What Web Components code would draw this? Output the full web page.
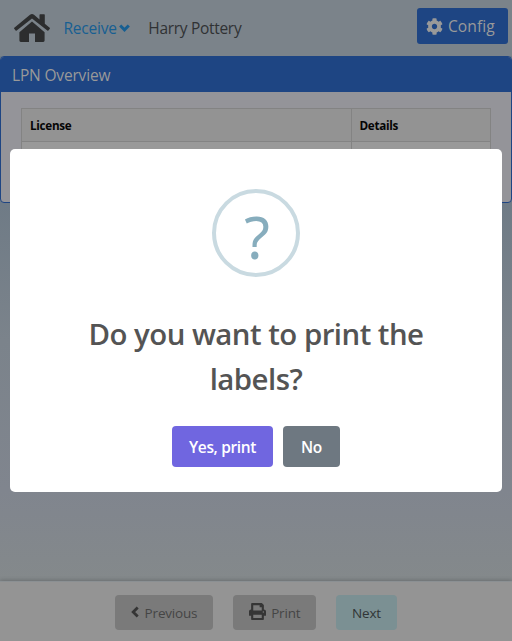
<!DOCTYPE html>
<html lang="en"><head><meta charset="utf-8"><title>LPN Overview</title>
<style>
html,body{margin:0;height:100%;overflow:hidden}
body{font:15.5px/24px "Open Sans","Noto Sans",sans-serif;color:#303234}
</style></head><body>
<lpn-app></lpn-app>
<script>
const define=(name,html)=>customElements.define(name,class extends HTMLElement{
  constructor(){super();this.attachShadow({mode:'open'}).innerHTML=html}
});

define('top-bar',`<style>
:host{display:flex;height:56px;box-sizing:border-box;padding:8px 4px 12px 14px;background:#7b838a;align-items:flex-start}
.home{width:36px;height:28px;margin-top:6px;fill:#2c2d2e}
.link{display:flex;align-items:center;height:24px;margin:8px 0 0 13.500px;color:#175f92;letter-spacing:-.2px}
.link svg{width:11px;height:8px;margin:0 0 1px 2.500px;fill:none;stroke:#175f92;stroke-width:3}
.user{margin:8px 0 0 18px;letter-spacing:-.31px}
.cfg{margin-left:auto;width:91px;height:36px;box-sizing:border-box;padding-left:9px;display:flex;align-items:center;background:#1e4583;color:#999;border-radius:3px;letter-spacing:.04px;font-size:15.600px}
.cfg svg{width:17px;height:17px;margin-right:5px;fill:#999}
</style>
<svg class="home" viewBox="0 0 36 28"><path d="M18 7.6 5.4 18.2V26.6Q5.4 28 6.8 28H15V19.5H21V28H29.200Q30.600 28 30.600 26.600V18.200Z"/><path d="M18 0Q19 0 20 .8L25.500 5.400V.9Q25.500.2 26.200.2H30.200Q30.800.2 30.800.9V9.700L35.700 13.800Q36.200 14.300 35.800 14.800L34.400 16.500Q33.900 17 33.300 16.600L18 4.400 2.700 16.600Q2.100 17 1.600 16.500L.2 14.800Q-.2 14.300.3 13.800L16 .8Q17 0 18 0Z"/></svg>
<div class="link">Receive<svg viewBox="0 0 11 8"><path d="M1.200 1.500 5.500 5.800 9.800 1.500"/></svg></div>
<div class="user">Harry Pottery</div>
<div class="cfg"><svg viewBox="0 0 512 512"><path d="M487.400 315.700l-42.600-24.600c4.300-23.200 4.300-47 0-70.200l42.600-24.600c4.900-2.800 7.100-8.600 5.500-14-11.100-35.600-30-67.800-54.700-94.600-3.800-4.100-10-5.100-14.800-2.300L380.800 110c-17.900-15.400-38.500-27.300-60.800-35.100V25.800c0-5.600-3.900-10.500-9.400-11.700-36.700-8.200-74.300-7.800-109.200 0-5.500 1.200-9.400 6.100-9.400 11.700V75c-22.200 7.900-42.800 19.800-60.800 35.100L88.700 85.500c-4.900-2.800-11-1.900-14.800 2.300-24.700 26.700-43.600 58.900-54.700 94.600-1.700 5.400.6 11.200 5.500 14L67.300 221c-4.300 23.200-4.300 47 0 70.200l-42.600 24.600c-4.900 2.800-7.100 8.600-5.500 14 11.100 35.600 30 67.800 54.700 94.600 3.800 4.100 10 5.100 14.800 2.300l42.600-24.600c17.900 15.400 38.500 27.300 60.800 35.100v49.200c0 5.600 3.900 10.500 9.400 11.700 36.700 8.200 74.300 7.800 109.200 0 5.500-1.200 9.400-6.100 9.400-11.700v-49.200c22.200-7.900 42.800-19.800 60.800-35.100l42.600 24.600c4.900 2.800 11 1.900 14.800-2.300 24.700-26.700 43.600-58.900 54.700-94.600 1.500-5.500-.7-11.300-5.600-14.100zM256 336c-44.100 0-80-35.900-80-80s35.900-80 80-80 80 35.900 80 80-35.900 80-80 80z"/></svg>Config</div>`);

define('overview-panel',`<style>
:host{display:block;height:147px;box-sizing:border-box;border:1px solid #1e4583;border-radius:4px;background:#949499;overflow:hidden}
.head{height:35px;line-height:36px;padding-left:11px;background:#1e4583;color:#999;letter-spacing:-.17px}
.grid{display:grid;grid-template-columns:329px 138px;grid-template-rows:32px 32px;gap:1px;width:468px;margin:16px 0 0 20px;border:1px solid #838383;background:#838383}
.grid>div{background:#999}
.grid>.th{background:#939393;color:#050505;font-weight:700;font-size:11.700px;line-height:33px;padding-left:8px;letter-spacing:-.3px}
.grid>.th+.th{padding-left:7.500px}
</style><div class="head"><slot></slot></div>
<div class="grid"><div class="th">License</div><div class="th">Details</div><div></div><div></div></div>`);

define('bottom-bar',`<style>
:host{display:flex;justify-content:center;gap:20px;height:60px;box-sizing:border-box;padding-top:13px;border-top:1px solid #8b9093;background:#949494;box-shadow:0 -1px 4px #0003}
</style><slot></slot>`);

define('foot-button',`<style>
:host{display:flex;align-items:center;justify-content:center;box-sizing:border-box;width:var(--w);height:35px;border-radius:4px;background:#7a7a7a;color:#454545;font-size:13.500px;letter-spacing:-.18px}
:host([primary]){background:#7b9093;color:#303536}
::slotted(svg){flex:none}
</style><slot></slot>`);

define('confirm-dialog',`<style>
:host{position:absolute;left:10px;top:149px;width:492px;height:343px;display:flex;flex-direction:column;align-items:center;box-sizing:border-box;padding-top:40px;background:#fff;border-radius:5px;color:#545454}
.icon{box-sizing:border-box;width:88px;height:88px;border:4px solid #c9dae1;border-radius:50%;color:#87adbd;font-family:"Noto Sans",sans-serif;font-size:59px;line-height:80px;text-align:center}
.icon span{display:inline-block;transform:translate(1px,3px)}
h2{margin:35px 0 0;width:350px;text-align:center;font-size:29.400px;line-height:45px;font-weight:600;letter-spacing:-.52px}
.row{display:flex;gap:10px;margin-top:24px}
.b{height:41px;line-height:42px;width:101px;text-align:center;border-radius:4px;background:#7066e0;color:#fff;font-weight:600;font-size:15.500px;letter-spacing:-.35px}
.b+.b{width:57px;background:#6e7881}
</style><div class="icon"><span>?</span></div><h2>Do you want to print the labels?</h2>
<div class="row"><div class="b">Yes, print</div><div class="b">No</div></div>`);

define('lpn-app',`<style>
:host{display:flex;flex-direction:column;height:641px;width:512px;background:linear-gradient(#6f7b86 203px,#7b838b 340px,#80858e 490px,#84898b 581px)}
.space{flex:1}
</style>
<top-bar></top-bar><overview-panel>LPN Overview</overview-panel><div class="space"></div>
<bottom-bar>
<foot-button style="--w:98px"><svg width="8" height="12" viewBox="0 0 8 12" style="margin:0 6px 2px 0" fill="none" stroke="#353535" stroke-width="2.800"><path d="M6.700 1.500 2.200 6 6.700 10.500"/></svg>Previous</foot-button>
<foot-button style="--w:83px"><svg width="17" height="17" viewBox="0 0 512 512" style="margin:0 5.5px 2px 0" fill="#353535"><path d="M448 192V77.250c0-8.490-3.370-16.620-9.370-22.630L393.370 9.370c-6-6-14.140-9.370-22.630-9.370H96C78.330 0 64 14.330 64 32v160c-35.350 0-64 28.650-64 64v112c0 8.840 7.160 16 16 16h48v96c0 17.670 14.330 32 32 32h320c17.670 0 32-14.330 32-32v-96h48c8.840 0 16-7.160 16-16V256c0-35.350-28.650-64-64-64zm-64 256H128v-96h256v96zm0-224H128V64h192v48c0 8.840 7.160 16 16 16h48v96zm48 72c-13.250 0-24-10.750-24-24 0-13.260 10.750-24 24-24s24 10.740 24 24c0 13.250-10.750 24-24 24z"/></svg>Print</foot-button>
<foot-button primary style="--w:61px">Next</foot-button>
</bottom-bar>
<confirm-dialog></confirm-dialog>`);
</script></body></html>
